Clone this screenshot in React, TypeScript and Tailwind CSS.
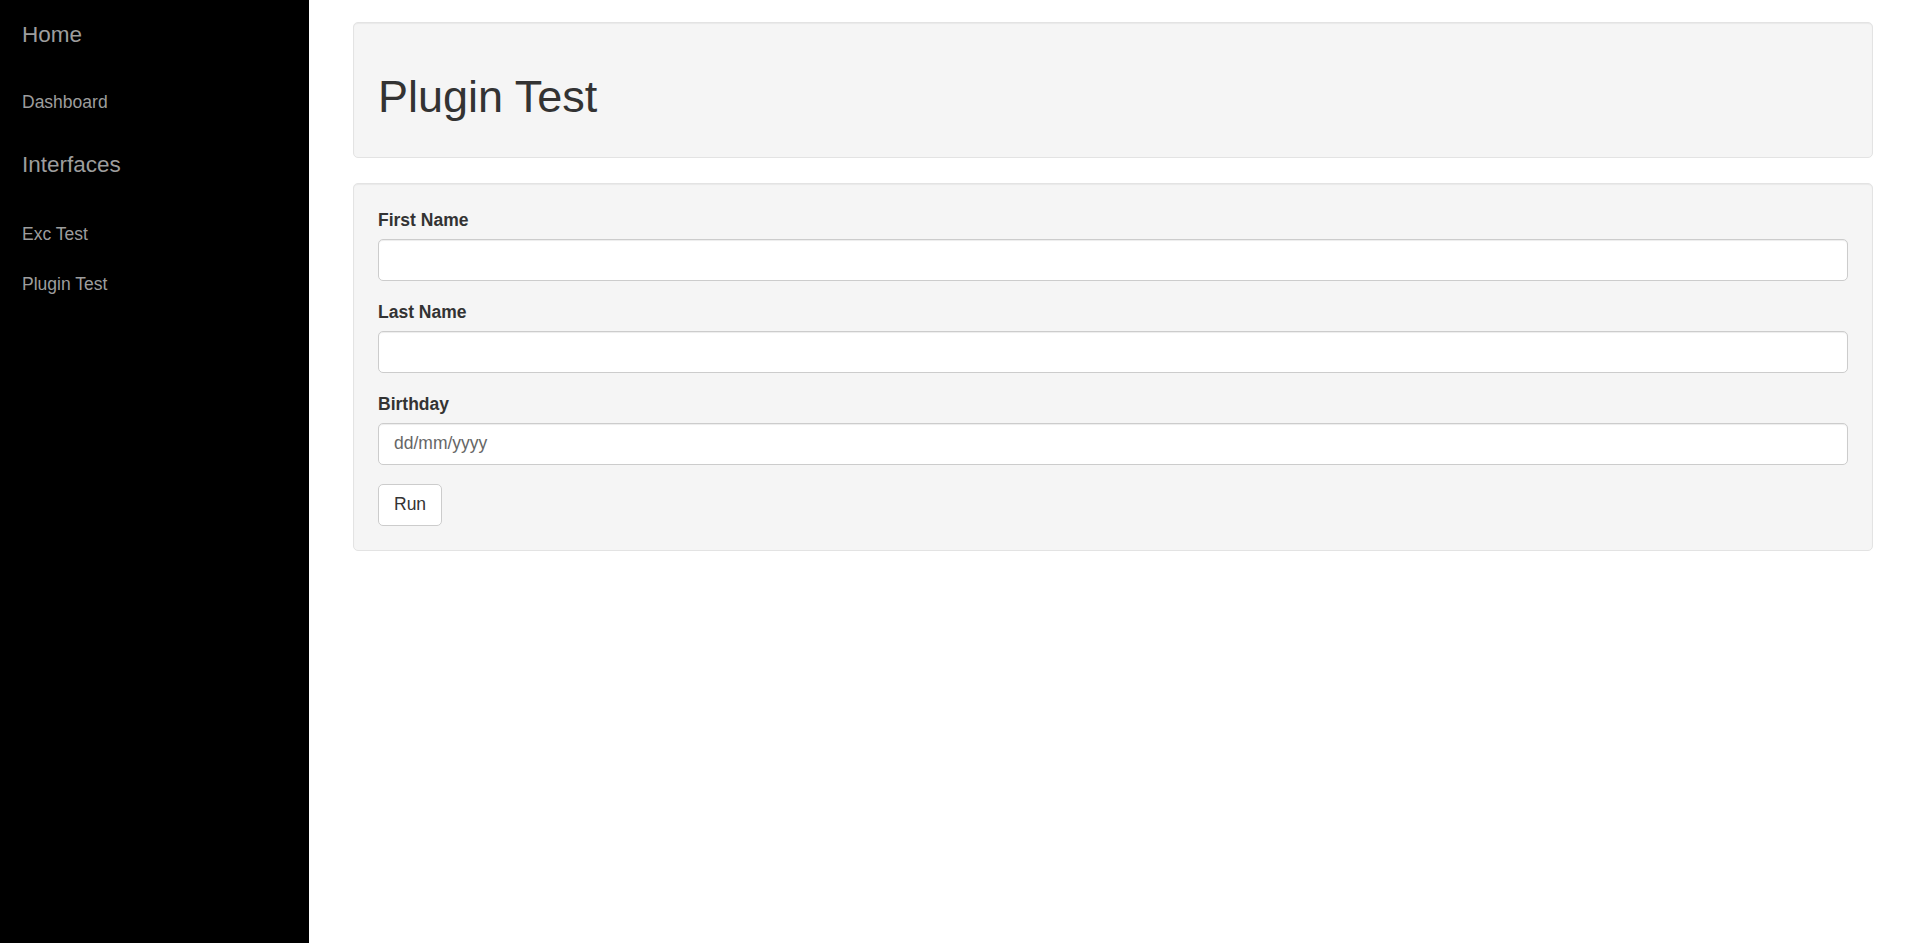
import React from "react";

const font = { fontFamily: '"Liberation Sans", Arial, Helvetica, sans-serif' };

function Field({ label, placeholder }: { label: string; placeholder?: string }) {
  return (
    <div className="mb-[19px] flex flex-col">
      <label className="mb-[6px] text-[17.5px] font-bold leading-[25px] text-[#333333]">{label}</label>
      <input
        type="text"
        placeholder={placeholder}
        className="h-[42px] w-full rounded-[5px] border border-[#cccccc] bg-white px-[15px] text-[17.5px] text-[#555555] shadow-[inset_0_1px_1px_rgba(0,0,0,0.075)] outline-none placeholder:text-[#666666]"
      />
    </div>
  );
}

export default function App() {
  return (
    <div className="flex min-h-screen w-full bg-white" style={font}>
      <aside className="flex h-screen w-[309px] shrink-0 flex-col bg-black pl-[22px] pt-[22px] text-[#9d9d9d]">
        <div className="text-[22.5px] leading-[25px]">Home</div>
        <div className="mt-[43px] text-[17.5px] leading-[25px]">Dashboard</div>
        <div className="mt-[37px] text-[22.5px] leading-[25px]">Interfaces</div>
        <div className="mt-[45px] text-[17.5px] leading-[25px]">Exc Test</div>
        <div className="mt-[25px] text-[17.5px] leading-[25px]">Plugin Test</div>
      </aside>
      <main className="flex-1 pl-[44px] pr-[47px] pt-[22px]">
        <div className="mb-[25px] rounded-[5px] border border-[#e3e3e3] bg-[#f5f5f5] p-[24px] shadow-[inset_0_1px_1px_rgba(0,0,0,0.05)]">
          <h1 className="mb-[11px] mt-[25px] text-[45px] font-normal leading-[49.5px] text-[#333333]">Plugin Test</h1>
        </div>
        <div className="rounded-[5px] border border-[#e3e3e3] bg-[#f5f5f5] p-[24px] shadow-[inset_0_1px_1px_rgba(0,0,0,0.05)]">
          <Field label="First Name" />
          <Field label="Last Name" />
          <Field label="Birthday" placeholder="dd/mm/yyyy" />
          <button className="h-[42px] rounded-[5px] border border-[#cccccc] bg-white px-[15px] text-[17.5px] leading-[25px] text-[#333333]">
            Run
          </button>
        </div>
      </main>
    </div>
  );
}
